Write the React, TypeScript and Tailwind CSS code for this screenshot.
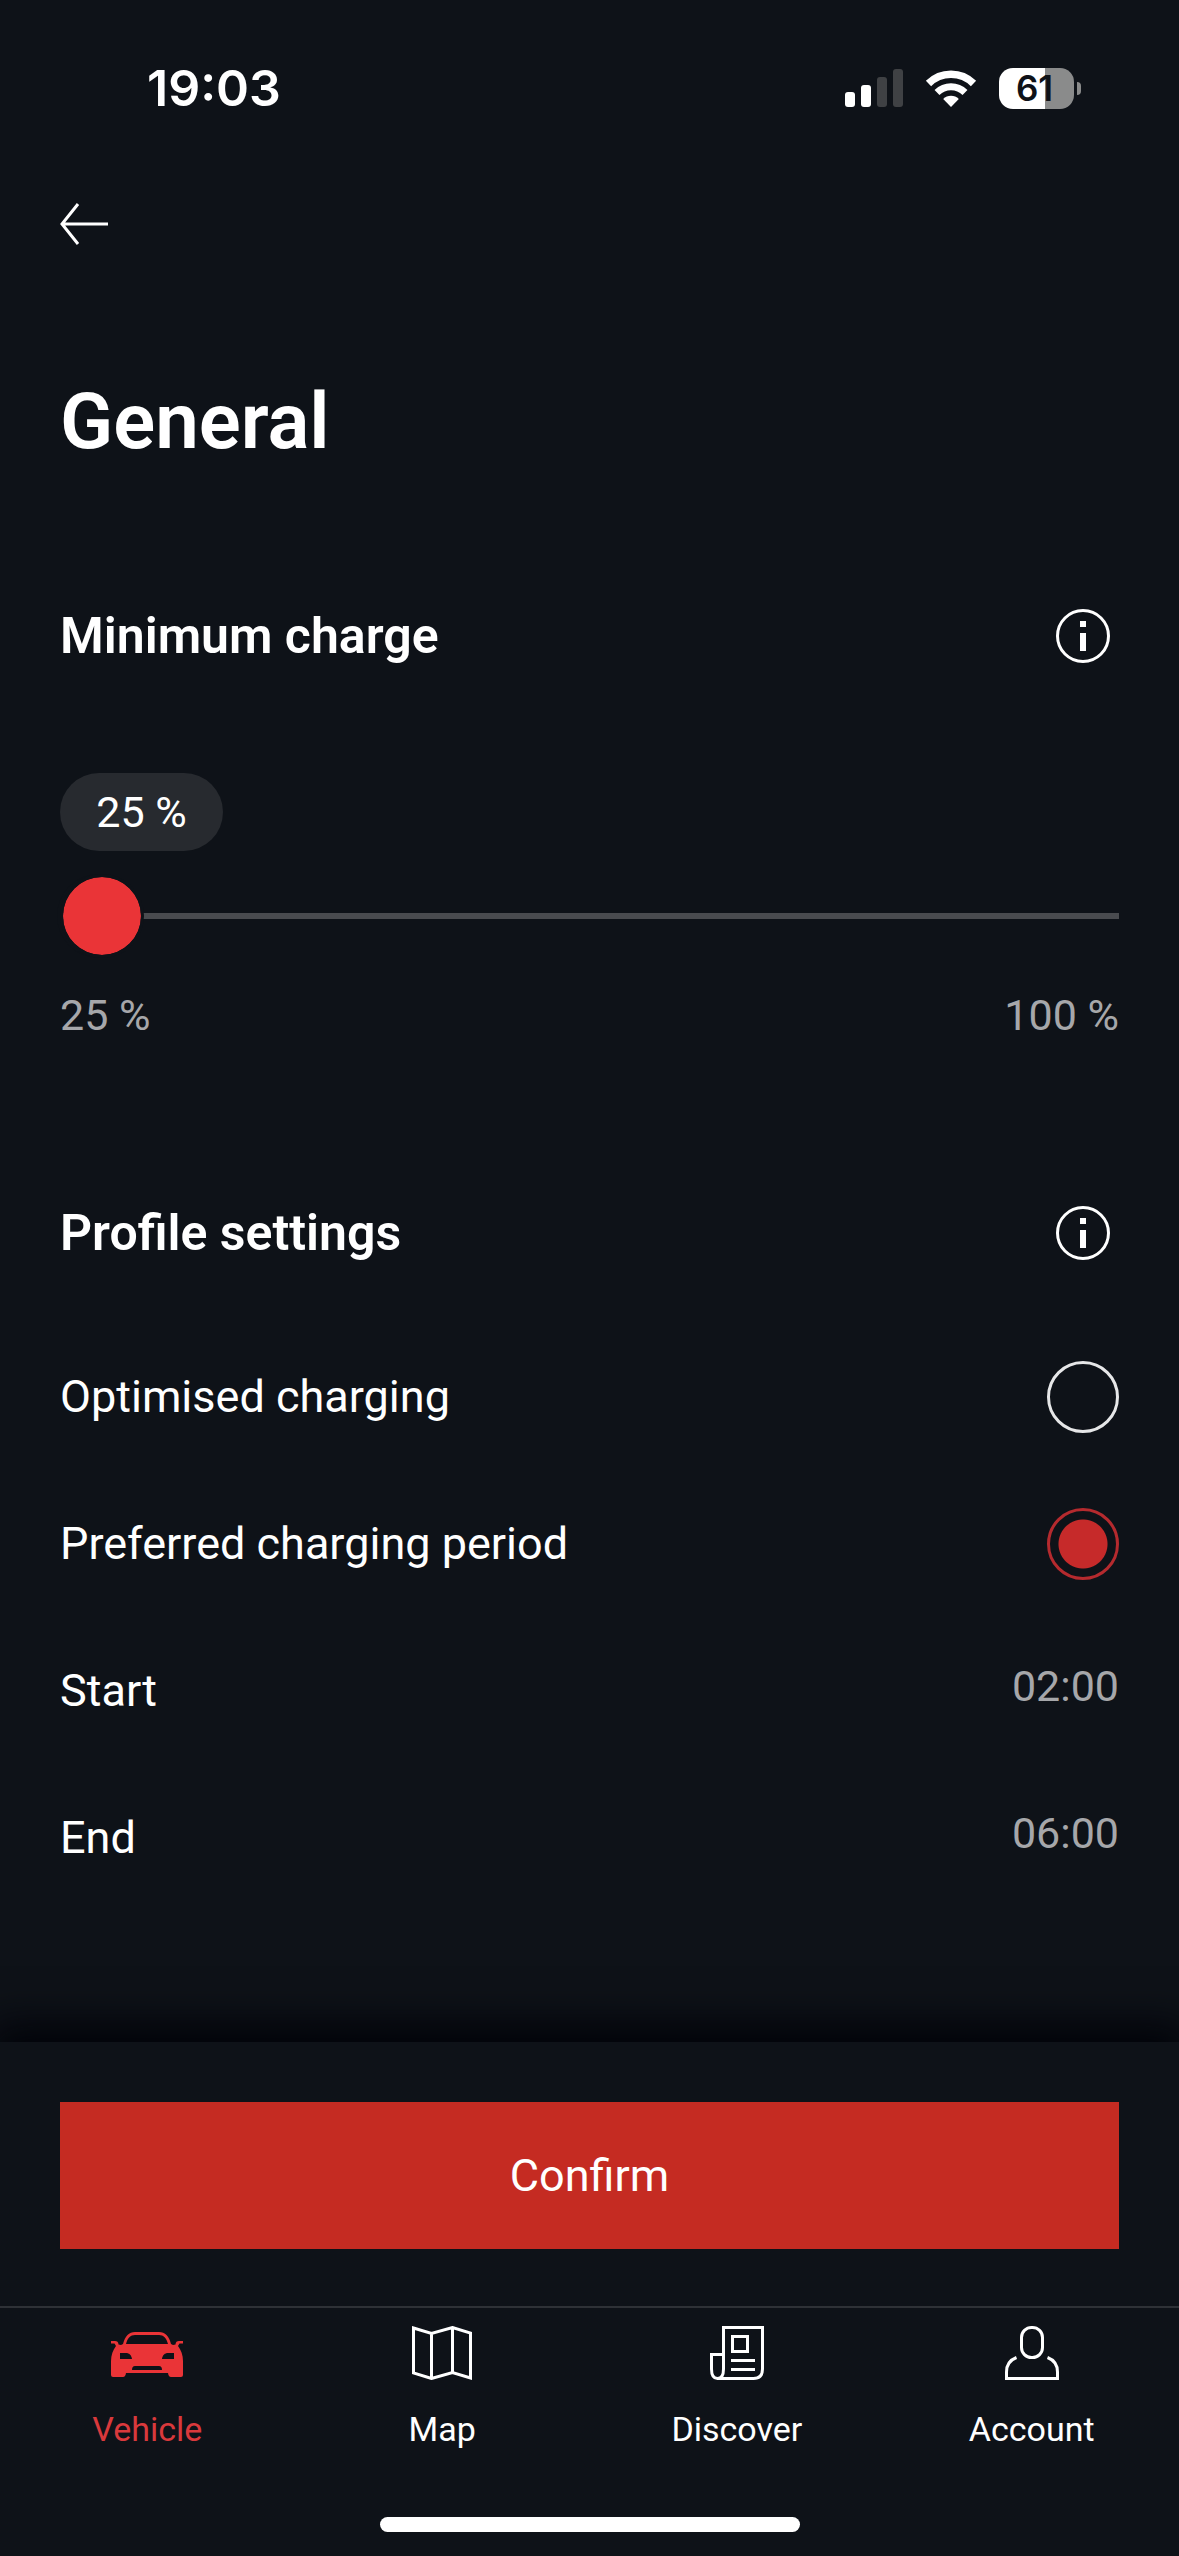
import { useState, type ReactNode } from "react";

function SignalIcon() {
  return (
    <svg width="58" height="38" viewBox="0 0 58 38" aria-hidden="true">
      <rect x="0" y="23" width="10" height="15" rx="3" fill="#fff" />
      <rect x="16" y="16" width="10" height="22" rx="3" fill="#fff" />
      <rect x="32" y="8" width="10" height="30" rx="3" fill="#3f4144" />
      <rect x="48" y="0" width="10" height="38" rx="3" fill="#3f4144" />
    </svg>
  );
}

function WifiIcon() {
  return (
    <svg width="52" height="38" viewBox="0 0 52 38" fill="none" aria-hidden="true">
      <path d="M3.5 14.5 A32 32 0 0 1 48.5 14.5" stroke="#fff" strokeWidth="7.5" />
      <path d="M12 23.5 A20 20 0 0 1 40 23.5" stroke="#fff" strokeWidth="7" />
      <path d="M26 38 L18.2 30 A11 11 0 0 1 33.8 30 Z" fill="#fff" />
    </svg>
  );
}

function StatusBar() {
  return (
    <header className="flex h-44 items-center justify-between pr-[98px] pl-[147px] font-['Inter',sans-serif]">
      <span className="text-[50px] leading-none font-semibold">19:03</span>
      <div className="flex items-center gap-[22px]">
        <SignalIcon />
        <WifiIcon />
        <div className="flex items-center gap-[3px]">
          <span className="flex h-[41px] w-[75px] items-center justify-center rounded-[14px] bg-[linear-gradient(to_right,#ffffff_61%,#8a8b8b_61%)] pr-1 text-[35px] leading-none font-semibold text-[#0e1218]">
            61
          </span>
          <span className="h-[13px] w-[4px] rounded-r-full bg-[#8a8b8b]" />
        </div>
      </div>
    </header>
  );
}

function InfoButton({ label }: { label: string }) {
  return (
    <button type="button" aria-label={label} className="mr-[9px]">
      <svg width="54" height="54" viewBox="0 0 54 54" fill="none">
        <circle cx="27" cy="27" r="25.5" stroke="#fff" strokeWidth="3" />
        <rect x="24" y="12" width="6" height="6" fill="#fff" />
        <rect x="24" y="24" width="6" height="18" fill="#fff" />
      </svg>
    </button>
  );
}

function SectionHeading({ children }: { children: string }) {
  return (
    <div className="flex h-[72px] items-center justify-between">
      <h2 className="text-[50px] leading-[72px] font-semibold">{children}</h2>
      <InfoButton label={`About ${children}`} />
    </div>
  );
}

function RadioRow({
  label,
  checked,
  onSelect,
}: {
  label: string;
  checked: boolean;
  onSelect: () => void;
}) {
  return (
    <label className="flex h-[147px] items-center justify-between">
      <span className="text-[45px]">{label}</span>
      <input
        type="radio"
        name="profile"
        checked={checked}
        onChange={onSelect}
        className="size-[72px] appearance-none rounded-full border-[3px] border-[#e6e7e8] checked:border-[#b52a2e] checked:bg-[radial-gradient(circle,#c62a2a_24px,transparent_25px)]"
      />
    </label>
  );
}

function TimeRow({ label, time }: { label: string; time: string }) {
  return (
    <button type="button" className="flex h-[147px] w-full items-center justify-between">
      <span className="text-[45px]">{label}</span>
      <span className="pb-2 text-[43px] text-[#a6a7aa]">{time}</span>
    </button>
  );
}

function TabItem({
  label,
  active = false,
  children,
}: {
  label: string;
  active?: boolean;
  children: ReactNode;
}) {
  return (
    <a
      href="#"
      aria-current={active ? "page" : undefined}
      className={
        active
          ? "flex flex-1 flex-col items-center gap-[25px] text-[#d9393c]"
          : "flex flex-1 flex-col items-center gap-[25px] text-white"
      }
    >
      {children}
      <span className="text-[34px] leading-[48px]">{label}</span>
    </a>
  );
}

function CarIcon() {
  return (
    <svg width="72" height="54" viewBox="0 0 72 54" fill="#ea3437" aria-hidden="true">
      <path
        fillRule="evenodd"
        d="M24 6 H48 C54 6 58 10 60 18 L62 19 L64.5 18.5 C64.5 16 66 15 68 15 H72 V17.5 H68.5 L67 20 C70 24 72 29 72 35 V49 Q72 51 70 51 H60 Q57.500 51 57 47 H15 Q14.500 51 12 51 H2 Q0 51 0 49 V35 C0 29 2 24 5 20 L3.500 17.500 H0 V15 H4 C6 15 7.500 16 7.500 18.500 L10 19 L12 18 C14 10 18 6 24 6 Z M24 9 C19.500 9 16.500 12 15 18 H57 C55.500 12 52.500 9 48 9 Z M9 27 H15 C18 27 20.500 29 21 33 H9 Z M63 27 H57 C54 27 51.500 29 51 33 H63 Z M24 40 H48 Q51 40 51 44 H21 Q21 40 24 40 Z"
      />
    </svg>
  );
}

function MapIcon() {
  return (
    <svg width="60" height="54" viewBox="0 0 60 54" fill="none" stroke="currentColor" strokeWidth="3" aria-hidden="true">
      <path d="M1.500 2 L19.500 7.500 L40.500 1.500 L58.500 7 V52 L40.500 46.500 L19.500 52.500 L1.500 47 Z M19.500 7.500 V52.500 M40.500 1.500 V46.500" />
    </svg>
  );
}

function NewsIcon() {
  return (
    <svg width="54" height="54" viewBox="0 0 54 54" fill="none" stroke="currentColor" strokeWidth="3" aria-hidden="true">
      <path d="M13.500 43 V1.500 H52.500 V43 Q52.500 52.500 43.500 52.500 H7.500 M13.500 28.500 H1.500 V43 C1.500 49 3.500 52.500 7.500 52.500 C11.500 52.500 13.500 49 13.500 43" />
      <rect x="22.500" y="10.500" width="15" height="15" />
      <path d="M21 34.500 H45 M21 43.500 H45" />
    </svg>
  );
}

function AccountIcon() {
  return (
    <svg width="54" height="54" viewBox="0 0 54 54" fill="none" stroke="currentColor" strokeWidth="3" aria-hidden="true">
      <rect x="16.500" y="1.500" width="21" height="30" rx="10" />
      <path d="M11.500 31.500 C5 34 1.500 39.500 1.500 46 V52.500 H52.500 V46 C52.500 39.500 49 34 42.500 31.500" />
    </svg>
  );
}

export default function App() {
  const [charge, setCharge] = useState(25);
  const [profile, setProfile] = useState("preferred");

  return (
    <div className="flex min-h-screen flex-col bg-[#0e1218] font-['Roboto',sans-serif] text-white">
      <StatusBar />

      <main className="flex flex-1 flex-col px-[60px]">
        <button type="button" aria-label="Back" className="flex h-24 items-center self-start">
          <svg width="48" height="42" viewBox="0 0 48 42" fill="none" stroke="#fff" strokeWidth="3" aria-hidden="true">
            <path d="M48 21 H2 M18 1 L2 21 L18 41" />
          </svg>
        </button>

        <h1 className="mt-[90px] text-[78px] leading-[120px] font-semibold">General</h1>

        <section className="mt-[118px]">
          <SectionHeading>Minimum charge</SectionHeading>
          <output
            htmlFor="minimum-charge"
            className="mt-[101px] flex h-[78px] w-[163px] items-center justify-center rounded-full bg-[#272a2f] text-[43px]"
          >
            {charge} %
          </output>
          <input
            id="minimum-charge"
            type="range"
            min={25}
            max={100}
            value={charge}
            onChange={(event) => setCharge(Number(event.target.value))}
            aria-label="Minimum charge"
            className="mt-[23px] block h-[84px] w-full appearance-none bg-transparent [&::-webkit-slider-runnable-track]:h-[84px] [&::-webkit-slider-runnable-track]:bg-[linear-gradient(#494b4f,#494b4f)] [&::-webkit-slider-runnable-track]:bg-[length:100%_6px] [&::-webkit-slider-runnable-track]:bg-center [&::-webkit-slider-runnable-track]:bg-no-repeat [&::-webkit-slider-thumb]:size-[84px] [&::-webkit-slider-thumb]:appearance-none [&::-webkit-slider-thumb]:rounded-full [&::-webkit-slider-thumb]:border-[3px] [&::-webkit-slider-thumb]:border-[#0e1218] [&::-webkit-slider-thumb]:bg-[#ea3437] [&::-webkit-slider-thumb]:bg-clip-padding [&::-webkit-slider-thumb]:shadow-[-3px_0_0_0_#0e1218]"
          />
          <div className="mt-[27px] flex justify-between text-[43px] leading-[60px] text-[#a6a7aa]">
            <span>25 %</span>
            <span>100 %</span>
          </div>
        </section>

        <section className="mt-[152px]">
          <SectionHeading>Profile settings</SectionHeading>
          <div className="mt-[54px]">
            <RadioRow
              label="Optimised charging"
              checked={profile === "optimised"}
              onSelect={() => setProfile("optimised")}
            />
            <RadioRow
              label="Preferred charging period"
              checked={profile === "preferred"}
              onSelect={() => setProfile("preferred")}
            />
            <TimeRow label="Start" time="02:00" />
            <TimeRow label="End" time="06:00" />
          </div>
        </section>
      </main>

      <footer className="bg-[#0e1218] shadow-[0_-6px_40px_10px_#000208]">
        <div className="px-[60px] pt-[60px] pb-[57px]">
          <button type="button" className="h-[147px] w-full bg-[#c52b22] text-[45px]">
            Confirm
          </button>
        </div>
        <nav className="flex border-t-2 border-[#2e3136] pt-[18px]">
          <TabItem label="Vehicle" active>
            <CarIcon />
          </TabItem>
          <TabItem label="Map">
            <MapIcon />
          </TabItem>
          <TabItem label="Discover">
            <NewsIcon />
          </TabItem>
          <TabItem label="Account">
            <AccountIcon />
          </TabItem>
        </nav>
        <div className="mx-auto mt-16 mb-6 h-[15px] w-[420px] rounded-full bg-white" />
      </footer>
    </div>
  );
}
